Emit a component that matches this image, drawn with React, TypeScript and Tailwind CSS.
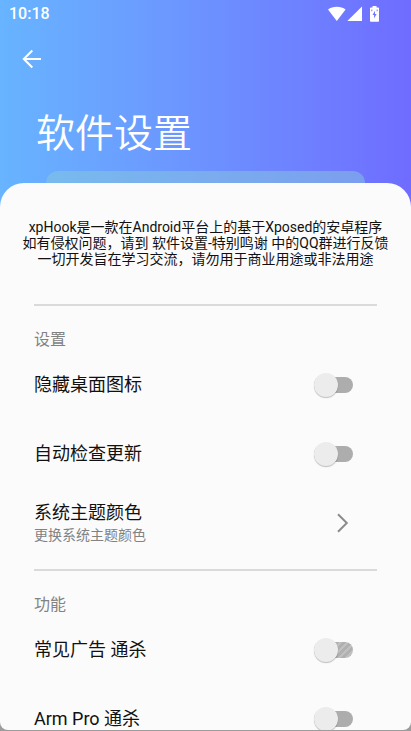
import { useState } from "react";

type SwitchRowProps = {
  id: string;
  label: string;
  textured?: boolean;
};

function StatusBar() {
  return (
    <div className="flex h-7 items-center justify-between pl-[9px] pr-8 text-white">
      <span className="font-['Roboto',sans-serif] text-base font-medium">10:18</span>
      <div className="flex items-center">
        {/* Wifi */}
        <svg width="18" height="16" viewBox="0 0 18 16" fill="currentColor">
          <path d="M0 3.6C2.3 1.8 5.4.8 8.800.8s6.500 1 8.800 2.800L8.800 15z" />
        </svg>
        {/* Signal */}
        <svg width="16" height="16" viewBox="0 0 16 16" fill="currentColor" className="ml-px">
          <path d="M15 .5V15H.3z" />
        </svg>
        {/* Battery */}
        <svg width="9" height="16" viewBox="0 0 9 16" className="ml-[7px]">
          <path d="M2.500 0h4v1.600H8.200c.5 0 .8.3.8.8V15c0 .5-.3.8-.8.8H.8c-.5 0-.8-.3-.8-.8V2.400c0-.5.3-.8.8-.8h1.700z" fill="white" />
          <path d="M5 4.800 2.500 9h1.600v3.500L6.600 8H5z" fill="#6f78ff" />
          <path d="M1.200 3.600h1.200v1.600H1.200zM6.600 3.600h1.200v1.600H6.600z" fill="#8a90ff" />
        </svg>
      </div>
    </div>
  );
}

function SwitchRow({ id, label, textured }: SwitchRowProps) {
  const [checked, setChecked] = useState(false);

  return (
    <div className="flex h-[69px] items-center justify-between pr-6">
      <label htmlFor={id} className="text-lg leading-6 text-[#111111]">
        {label}
      </label>
      <input
        id={id}
        type="checkbox"
        role="switch"
        checked={checked}
        onChange={() => setChecked(!checked)}
        className={`relative h-4 w-[39px] shrink-0 cursor-pointer appearance-none rounded-full before:absolute before:-top-1 before:left-0 before:size-6 before:rounded-full before:bg-[#ececec] before:shadow-[0_1px_1px_rgba(0,0,0,0.25)] before:transition-transform checked:bg-[#6a90ff] checked:before:translate-x-4 ${
          textured
            ? "bg-[repeating-linear-gradient(135deg,#b0b0b0_0px,#b0b0b0_3px,#c0c0c0_3px,#c0c0c0_5px)]"
            : "bg-[#adadad]"
        }`}
      />
    </div>
  );
}

function Divider() {
  return <hr className="h-0.5 border-0 bg-[#dadada]" />;
}

function SectionTitle({ children }: { children: string }) {
  return <h2 className="mt-6 text-base leading-5 text-[#828282]">{children}</h2>;
}

export default function App() {
  return (
    <div className="flex h-dvh flex-col overflow-hidden bg-[#9c9c9c] pb-px font-['Roboto','Noto_Sans_CJK_SC',sans-serif]">
      {/* Header */}
      <header className="shrink-0 bg-linear-to-r from-[#67b4ff] to-[#6f6cff] pb-6">
        <StatusBar />
        <button
          type="button"
          aria-label="返回"
          className="ml-4 mt-[15px] flex size-8 items-center justify-center text-white"
        >
          <svg width="20" height="20" viewBox="0 0 20 20" fill="none" stroke="currentColor" strokeWidth="2">
            <path d="M19 10H2.500M10.300 1.500 1.800 10l8.500 8.500" />
          </svg>
        </button>
        <h1 className="mt-[27px] px-9 font-['Noto_Sans_CJK_SC',sans-serif] text-[39px] font-[350] leading-[56px] text-white">
          软件设置
        </h1>
        {/* Card edge behind the sheet */}
        <div className="mx-[46px] mt-[13px] h-3 rounded-t-xl bg-[#88c8dd]/50" />
      </header>

      {/* Sheet */}
      <main className="relative -mt-6 flex-1 overflow-y-auto rounded-b-lg rounded-t-[24px] bg-[#fbfbfb] px-[34px] pt-9 [scrollbar-width:none]">
        <p className="-mx-4 mb-[37px] text-center text-sm leading-4 text-[#111111]">
          xpHook是一款在Android平台上的基于Xposed的安卓程序
          <br />
          如有侵权问题，请到 软件设置-特别鸣谢 中的QQ群进行反馈
          <br />
          一切开发旨在学习交流，请勿用于商业用途或非法用途
        </p>

        <Divider />
        <SectionTitle>设置</SectionTitle>
        <SwitchRow id="hide-icon" label="隐藏桌面图标" />
        <SwitchRow id="auto-update" label="自动检查更新" />
        <button type="button" className="mb-3 flex h-[69px] w-full items-center justify-between pr-6 text-left">
          <span>
            <span className="block text-lg leading-6 text-[#111111]">系统主题颜色</span>
            <span className="block text-sm leading-5 text-[#828282]">更换系统主题颜色</span>
          </span>
          <svg width="20" height="20" viewBox="0 0 20 20" fill="none" stroke="#8c8c8c" strokeWidth="2">
            <path d="M5 1.200 13.800 10 5 18.800" />
          </svg>
        </button>

        <Divider />
        <SectionTitle>功能</SectionTitle>
        <SwitchRow id="common-ads" label="常见广告 通杀" textured />
        <SwitchRow id="arm-pro" label="Arm Pro 通杀" />
      </main>
    </div>
  );
}
